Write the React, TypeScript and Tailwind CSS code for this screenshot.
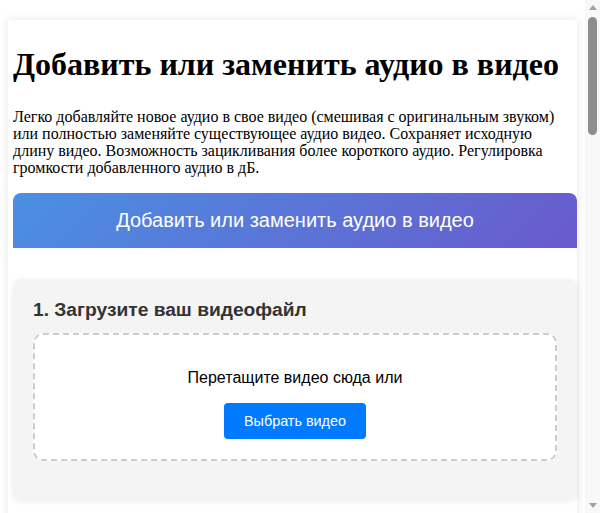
import React from 'react'

const serif = "font-['Liberation_Serif','Times_New_Roman',serif]"
const sans = "font-['Liberation_Sans',Arial,sans-serif]"

function Step({ title, children }: { title: string; children: React.ReactNode }) {
  return (
    <section className={`mt-[31px] rounded-lg bg-[#f4f4f4] p-5 shadow-[0_2px_6px_rgba(0,0,0,0.08)] ${sans}`}>
      <h3 className="mb-3 text-[19.2px] font-bold leading-[21.5px] text-[#333]">{title}</h3>
      {children}
    </section>
  )
}

function DropZone({ label, button }: { label: string; button: string }) {
  return (
    <div className="mb-[18px] rounded-[10px] border-2 border-dashed border-[#ccc] bg-white px-5 pt-[18px] pb-5 text-center">
      <p className="my-4 text-base leading-[18.4px] text-black">{label}</p>
      <button className="h-9 rounded-[4px] bg-[#007bff] px-5 text-[14.4px] leading-4 text-white">
        {button}
      </button>
    </div>
  )
}

// classic scrollbar look, drawn because the headless page shows none
function Scrollbar() {
  return (
    <div className="flex w-[15px] shrink-0 flex-col items-center bg-[#f8f8f8]">
      <div className="flex h-[15px] w-full items-center justify-center">
        <svg width="8" height="5" viewBox="0 0 8 5">
          <path d="M0 5 L4 0 L8 5 Z" fill="#a3a3a3" />
        </svg>
      </div>
      <div className="mt-[2px] h-[118px] w-[9px] rounded-full bg-[#8e8e8e]" />
      <div className="flex-1" />
      <div className="flex h-[15px] w-full items-center justify-center">
        <svg width="8" height="5" viewBox="0 0 8 5">
          <path d="M0 0 L8 0 L4 5 Z" fill="#a3a3a3" />
        </svg>
      </div>
    </div>
  )
}

export default function App() {
  return (
    <div className="flex h-[513px] overflow-hidden bg-white">
      <div className="min-w-0 flex-1 overflow-hidden">
        <div className="px-2 pt-5 pb-8">
          <div className="bg-white pl-[5px] pt-[5px] pb-10 shadow-[0_0_10px_rgba(0,0,0,0.1)]">
            <h1 className={`my-[21.44px] text-[32px] font-bold leading-[36.8px] text-black ${serif}`}>
              Добавить или заменить аудио в видео
            </h1>
            <p className={`mt-[24.5px] mb-[17.3px] text-base leading-[17px] text-black ${serif}`}>
              Легко добавляйте новое аудио в свое видео (смешивая с оригинальным звуком) или полностью
              заменяйте существующее аудио видео. Сохраняет исходную длину видео. Возможность
              зацикливания более короткого аудио. Регулировка громкости добавленного аудио в дБ.
            </p>

            <div
              className={`rounded-t-lg bg-[linear-gradient(135deg,#4a90e2,#6a5acd)] py-4 text-center text-[20px] leading-[23px] text-white ${sans}`}
            >
              Добавить или заменить аудио в видео
            </div>

            <Step title="1. Загрузите ваш видеофайл">
              <DropZone label="Перетащите видео сюда или" button="Выбрать видео" />
            </Step>

            <Step title="2. Загрузите аудиофайл">
              <DropZone label="Перетащите аудио сюда или" button="Выбрать аудио" />
            </Step>

            <Step title="3. Режим">
              <div className="flex flex-col gap-3 text-base text-black">
                <label className="flex items-center gap-2">
                  <input type="radio" name="mode" defaultChecked /> Смешать с оригинальным звуком
                </label>
                <label className="flex items-center gap-2">
                  <input type="radio" name="mode" /> Заменить оригинальный звук
                </label>
                <label className="flex items-center gap-2">
                  <input type="checkbox" defaultChecked /> Зациклить аудио, если оно короче видео
                </label>
              </div>
            </Step>
          </div>
        </div>
      </div>
      <Scrollbar />
    </div>
  )
}
